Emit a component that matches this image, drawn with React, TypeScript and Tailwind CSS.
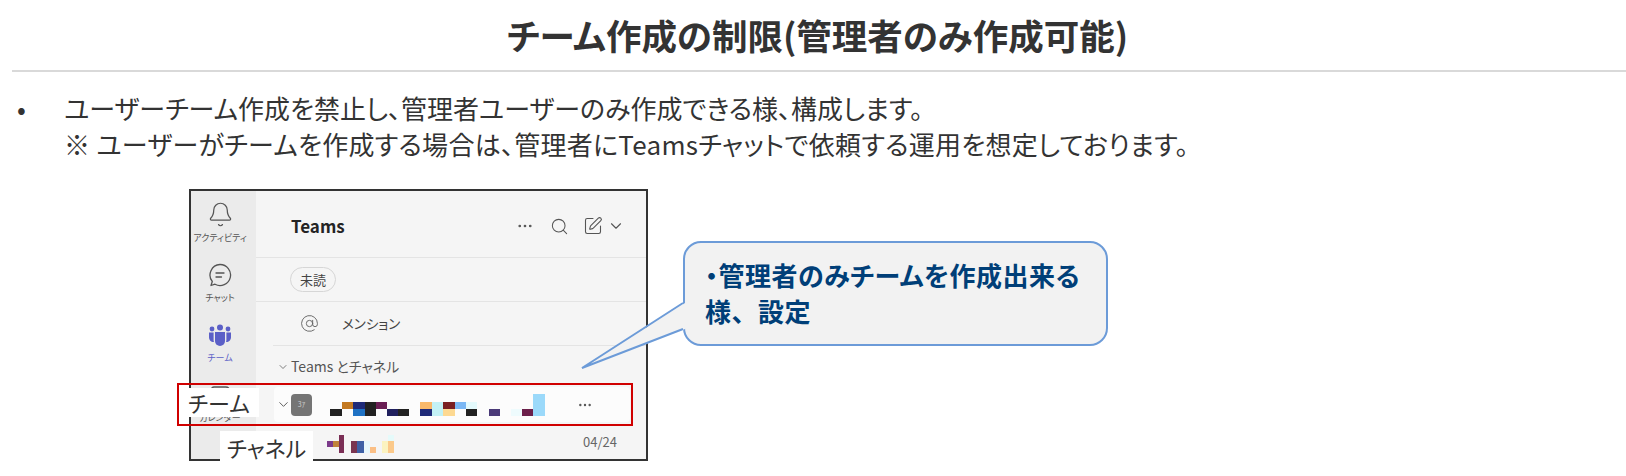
import { AtSign, Bell, ChevronDown, MoreHorizontal, Search, SquarePen } from "lucide-react";

type Cell = [number, number, number, number, string];

// mosaic blocks that hide the team and channel names
const teamCells: Cell[] = [
  [180, 100, 37, 22, "#222222"],
  [217, 79, 33, 21, "#c47a22"],
  [250, 79, 35, 21, "#1f2a78"],
  [250, 100, 35, 22, "#1f72c4"],
  [285, 79, 32, 43, "#222222"],
  [317, 79, 33, 21, "#6b1f55"],
  [350, 100, 35, 22, "#20205e"],
  [385, 100, 33, 22, "#222222"],
  [451, 79, 35, 21, "#f9b96b"],
  [451, 100, 35, 22, "#1f2a78"],
  [486, 79, 34, 43, "#c3f1f5"],
  [520, 79, 35, 21, "#7a1f22"],
  [520, 100, 35, 22, "#fdd992"],
  [555, 79, 33, 21, "#7ab8f5"],
  [588, 79, 32, 21, "#e4fafc"],
  [588, 100, 32, 22, "#222222"],
  [656, 100, 34, 22, "#4a3a78"],
  [722, 100, 35, 22, "#eefbfd"],
  [757, 100, 33, 22, "#6b1f4a"],
  [790, 57, 35, 65, "#9bd9fa"],
];

const channelCells: Cell[] = [
  [170, 202, 18, 17, "#7b3a8a"],
  [188, 202, 17, 17, "#c0833a"],
  [205, 183, 17, 54, "#7a2e55"],
  [242, 202, 17, 35, "#7a3550"],
  [259, 202, 22, 35, "#3f60a5"],
  [281, 202, 19, 35, "#e8f7fb"],
  [300, 219, 18, 18, "#fbbf85"],
  [336, 202, 17, 35, "#fbf3c0"],
  [353, 202, 18, 35, "#fbc98a"],
  [353, 183, 18, 19, "#e5fafa"],
];

function Mosaic({ cells, viewBox, className }: { cells: Cell[]; viewBox: string; className: string }) {
  return (
    <svg viewBox={viewBox} className={className} shapeRendering="crispEdges">
      {cells.map(([x, y, w, h, fill], i) => (
        <rect key={i} x={x} y={y} width={w} height={h} fill={fill} />
      ))}
    </svg>
  );
}

function ChatIcon() {
  return (
    <svg viewBox="0 0 24 24" className="h-6 w-6" fill="none" stroke="#555" strokeWidth="1.3" strokeLinecap="round">
      <path d="M12 1.500a10.500 10.500 0 1 1-5 19.700l-4 1.300 1.300-4A10.500 10.500 0 0 1 12 1.500Z" strokeLinejoin="round" />
      <path d="M8 10h8M8 14h5.500" />
    </svg>
  );
}

function TeamIcon() {
  return (
    <svg viewBox="0 0 24 24" className="h-6 w-6" fill="#5b5fc7">
      <circle cx="12" cy="4.500" r="3" />
      <circle cx="4" cy="6" r="2.400" />
      <circle cx="20" cy="6" r="2.400" />
      <path d="M1 9.500h4.600v7.500c0 .8.100 1.500.4 2.100C3.200 19.300 1 17 1 14.300Z" />
      <path d="M23 9.500h-4.600V17c0 .8-.1 1.500-.4 2.100 2.800.2 5-2.100 5-4.800Z" />
      <path d="M7 9h10v9a5 5 0 0 1-10 0Z" />
    </svg>
  );
}

function CalendarIcon() {
  return (
    <svg viewBox="0 0 24 24" className="h-6 w-6" fill="none" stroke="#555" strokeWidth="1.3">
      <rect x="3" y="4" width="18" height="17" rx="3" />
      <path d="M3 9h18" />
    </svg>
  );
}

const sideItems = [
  { label: "アクティビティ", icon: <Bell size={27} strokeWidth={1.1} className="-mt-[2px] mb-[-1px] text-[#555]" />, color: "text-[#555]" },
  { label: "チャット", icon: <ChatIcon />, color: "text-[#555]" },
  { label: "チーム", icon: <TeamIcon />, color: "text-[#5b5fc7]" },
  { label: "カレンダー", icon: <CalendarIcon />, color: "text-[#555]" },
];

export default function App() {
  return (
    <div className="h-[476px] w-[1626px] overflow-hidden bg-white text-[#333] [font-family:'Noto_Sans_CJK_JP','Liberation_Sans',sans-serif] [font-feature-settings:'palt']">
      <h1 className="flex h-[70px] items-center justify-center pl-[9px] text-[35.500px] font-bold leading-none">
        チーム作成の制限(管理者のみ作成可能)
      </h1>
      <div className="ml-3 h-[2px] bg-[#d9d9d9]" />

      <div className="mt-[18px] flex text-[26px] leading-[36px]">
        <span className="w-[64px] pl-[17px]">•</span>
        <div>
          <p>ユーザーチーム作成を禁止し、管理者ユーザーのみ作成できる様、構成します。</p>
          <p className="tracking-[0.27px]">※ ユーザーがチームを作成する場合は、管理者にTeamsチャットで依頼する運用を想定しております。</p>
        </div>
      </div>

      <div className="relative ml-[189px] mt-[27px] h-[272px] w-[459px]">
        {/* captured Teams panel */}
        <div className="flex h-full overflow-hidden border-2 border-[#333] bg-[#f5f5f5]">
          <aside className="flex w-[65px] shrink-0 flex-col items-center gap-[18px] bg-[#ebebeb] pr-[7px] pt-[12px]">
            {sideItems.map((item) => (
              <div key={item.label} className="flex h-[42px] flex-col items-center">
                {item.icon}
                <span className={`mt-[5px] whitespace-nowrap text-[9px] leading-[12px] ${item.color}`}>{item.label}</span>
              </div>
            ))}
          </aside>

          <div className="flex min-w-0 flex-1 flex-col">
            <div className="flex h-[67px] shrink-0 items-center border-b border-[#e4e4e4] pl-[35px] pr-[21px] pt-[4px]">
              <span className="text-[17px] font-bold text-[#242424]">Teams</span>
              <MoreHorizontal size={18} strokeWidth={1.6} className="ml-auto text-[#555]" />
              <Search size={19} strokeWidth={1.3} className="ml-[16px] text-[#555]" />
              <SquarePen size={20} strokeWidth={1.3} className="ml-[14px] text-[#555]" />
              <ChevronDown size={18} strokeWidth={1.5} className="ml-[4px] text-[#555]" />
            </div>
            <div className="flex h-[44px] shrink-0 items-center border-b border-[#e4e4e4] pl-[34px]">
              <span className="flex h-[25px] w-[46px] items-center justify-center rounded-full border border-[#d6d6d6] text-[13px] text-[#444]">
                未読
              </span>
            </div>
            <div className="ml-[17px] flex h-[44px] shrink-0 items-center border-b border-[#e4e4e4] pl-[27px]">
              <AtSign size={19} strokeWidth={1.2} className="text-[#666]" />
              <span className="ml-[23px] text-[13.500px] text-[#444]">メンション</span>
            </div>
            <div className="flex h-[41px] shrink-0 items-center gap-[2px] pl-[21px] text-[14px] text-[#555]">
              <ChevronDown size={12} strokeWidth={1.5} />
              <span>Teams とチャネル</span>
            </div>
            <div className="ml-[18px] mr-[16px] flex h-[35px] shrink-0 items-center rounded-[4px] bg-[#fcfcfc] pl-[2px]">
              <ChevronDown size={15} strokeWidth={1.5} className="text-[#555]" />
              <span className="flex h-[22px] w-[21px] items-center justify-center rounded-[4px] bg-[#757575] text-[7px] text-[#ccc]">
                3ｱ
              </span>
              <Mosaic cells={teamCells} viewBox="180 57 645 65" className="ml-[18px] h-[22px] w-[215px]" />
              <MoreHorizontal size={16} strokeWidth={1.6} className="ml-[32px] text-[#555]" />
            </div>
            <div className="flex min-h-0 flex-1 items-center pl-[71px] pr-[29px] pt-[6px]">
              <Mosaic cells={channelCells} viewBox="170 183 201 54" className="h-[18px] w-[67px]" />
              <span className="-mt-[3px] ml-auto text-[13px] text-[#666]">04/24</span>
            </div>
          </div>
        </div>

        {/* annotations laid over the capture */}
        <div className="absolute left-[-12px] top-[194px] h-[43px] w-[456px] border-2 border-[#d00000]" />
        <div className="absolute left-[-10px] top-[199px] flex h-[29px] w-[80px] items-center justify-center bg-white pb-[2px] text-[22px] leading-none">
          チーム
        </div>
        <div className="absolute left-[31px] top-[242px] flex h-[31px] w-[93px] items-center justify-center bg-white text-[22px] leading-none">
          チャネル
        </div>

        <div className="absolute left-[494px] top-[52px] h-[105px] w-[425px] rounded-[18px] border-2 border-[#6c9bd8] bg-[#f2f2f2] pl-[20px] pt-[14px] text-[26px] font-bold leading-[36px] tracking-[0.5px] text-[#003f78]">
          <p>・管理者のみチームを作成出来る</p>
          <p className="[font-feature-settings:normal]">様、設定</p>
        </div>
        <svg viewBox="0 0 110 70" className="absolute left-[390px] top-[111px] h-[70px] w-[110px]">
          <path d="M106 3 3 68 106 29Z" fill="#f2f2f2" />
          <path d="M104 3 3 68 104 29" fill="none" stroke="#6c9bd8" strokeWidth="2" />
        </svg>
      </div>
    </div>
  );
}
